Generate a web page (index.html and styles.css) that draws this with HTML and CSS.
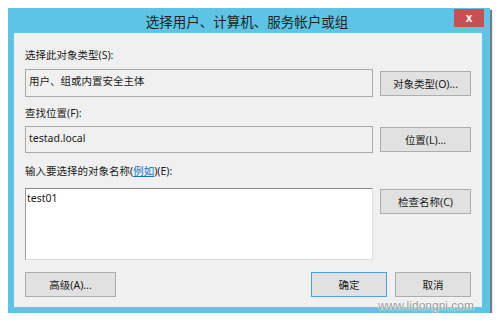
FILE: index.html
```html
<!DOCTYPE html>
<html lang="zh-CN">
<head>
  <meta charset="UTF-8" />
  <title>选择用户、计算机、服务帐户或组</title>
  <link rel="stylesheet" href="styles.css">
</head>
<body>

<div class="window">
  <div class="titlebar">
    <span class="title">选择用户、计算机、服务帐户或组</span>
    <button class="close">x</button>
  </div>

  <div class="content">
    <div class="label">选择此对象类型(S):</div>
    <div class="row row-one">
      <div class="field">用户、组或内置安全主体</div>
      <button class="btn">对象类型(O)...</button>
    </div>

    <div class="label label-two">查找位置(F):</div>
    <div class="row row-two">
      <div class="field">testad.local</div>
      <button class="btn">位置(L)...</button>
    </div>

    <div class="label label-three">输入要选择的对象名称(<a href="#">例如</a>)(E):</div>
    <div class="row row-three">
      <div class="names">test01</div>
      <button class="btn btn-top">检查名称(C)</button>
    </div>

    <div class="footer">
      <button class="btn btn-wide">高级(A)...</button>
      <div class="actions">
        <button class="btn btn-ok">确定</button>
        <button class="btn btn-cancel">取消</button>
      </div>
    </div>
  </div>

  <div class="watermark">www.lidongni.com</div>
</div>

</body>
</html>
```

FILE: styles.css
```css
body {
  margin: 0;
  background-color: #fff;
  font-family: "Noto Sans", "Noto Sans CJK SC", sans-serif;
  font-size: 10.5px;
  color: #1a1a1a;
}
.window {
  position: relative;
  margin: 8px 0 0 8px;
  width: 482px;
  height: 305px;
  box-sizing: border-box;
  background-color: #5ec4e6;
  border-left: 6px solid #5ec4e6;
  border-right: 8px solid #5ec4e6;
  border-bottom: 6px solid #5ec4e6;
  box-shadow: 2px 2px 1px #7a7a7a;
}
.titlebar {
  position: relative;
  height: 25px;
  display: flex;
  align-items: center;
  justify-content: center;
}
.title {
  font-family: "Noto Sans CJK SC", sans-serif;
  font-size: 13.5px;
  color: #222;
  margin-left: -2px;
}
.close {
  position: absolute;
  top: 1px;
  right: -2px;
  width: 30px;
  height: 18px;
  border: none;
  background-color: #c75050;
  color: #fff;
  font-family: "Liberation Sans", sans-serif;
  font-size: 12px;
  font-weight: bold;
  line-height: 14px;
  padding: 0;
}
.content {
  background-color: #f0f0f0;
  height: 274px;
  box-sizing: border-box;
  padding: 14px 11px 0 11px;
}
.label {
  line-height: 16px;
}
.label a {
  color: #1a6fc4;
}
.label-two {
  margin-top: 8px;
}
.label-three {
  margin-top: 10px;
}
.row {
  display: grid;
  grid-template-columns: 348px 91px;
  column-gap: 7px;
  align-items: center;
}
.row-one {
  margin-top: 6px;
}
.row-two {
  margin-top: 5px;
}
.row-three {
  margin-top: 9px;
  align-items: start;
}
.field {
  height: 28px;
  box-sizing: border-box;
  border: 1px solid #a9a9a9;
  padding: 3px 3px;
  line-height: 16px;
}
.row-two .field {
  height: 27px;
}
.names {
  height: 72px;
  box-sizing: border-box;
  background-color: #fff;
  border: 1px solid #dcdcdc;
  border-top-color: #8a8a8a;
  border-left-color: #9a9a9a;
  padding: 1px 1px;
  line-height: 16px;
}
.btn {
  height: 25px;
  padding: 0;
  background-color: #e1e1e1;
  border: 1px solid #adadad;
  font-family: "Noto Sans", "Noto Sans CJK SC", sans-serif;
  font-size: 10.5px;
  color: #1a1a1a;
}
.btn-top {
  margin-top: 1px;
}
.footer {
  margin-top: 12px;
  display: flex;
  justify-content: space-between;
}
.btn-wide {
  width: 91px;
}
.actions {
  display: flex;
  gap: 8px;
}
.btn-ok {
  width: 76px;
  border-color: #4aa3df;
}
.btn-cancel {
  width: 76px;
}
.watermark {
  position: absolute;
  right: 8px;
  bottom: -6px;
  font-family: "Liberation Sans", sans-serif;
  font-size: 12px;
  color: #9a9a9a;
  text-shadow: 0 0 2px #fff, 0 0 2px #fff;
}
```
